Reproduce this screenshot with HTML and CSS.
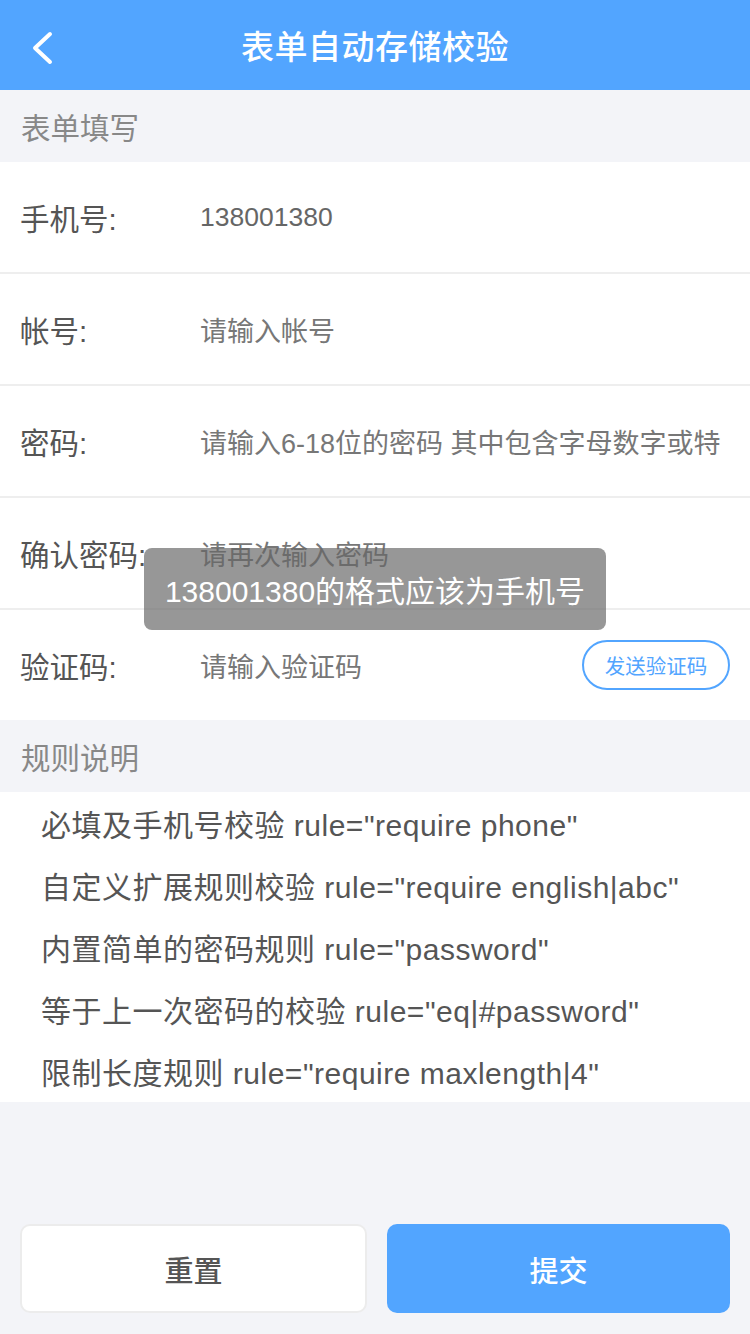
FILE: index.html
```html
<!DOCTYPE html>
<html lang="zh-CN">
<head>
<meta charset="utf-8">
<title>表单自动存储校验</title>
<link rel="stylesheet" href="styles.css">
</head>
<body>
<div class="page">
  <header class="navbar">
    <span class="back">
      <svg width="30" height="40" viewBox="0 0 30 40"><polyline points="20,6 5,20 20,34" fill="none" stroke="#fff" stroke-width="4" stroke-linecap="round" stroke-linejoin="round"/></svg>
    </span>
    <h1 class="title">表单自动存储校验</h1>
  </header>

  <div class="section-title">表单填写</div>
  <div class="form">
    <div class="row">
      <span class="label">手机号:</span>
      <span class="value filled">138001380</span>
    </div>
    <div class="row">
      <span class="label">帐号:</span>
      <span class="value">请输入帐号</span>
    </div>
    <div class="row">
      <span class="label">密码:</span>
      <span class="value">请输入6-18位的密码 其中包含字母数字或特</span>
    </div>
    <div class="row">
      <span class="label">确认密码:</span>
      <span class="value">请再次输入密码</span>
    </div>
    <div class="row">
      <span class="label">验证码:</span>
      <span class="value">请输入验证码</span>
      <span class="send">发送验证码</span>
    </div>
  </div>

  <div class="section-title">规则说明</div>
  <div class="rules">
    <div class="rule">必填及手机号校验 rule="require phone"</div>
    <div class="rule">自定义扩展规则校验 rule="require english|abc"</div>
    <div class="rule">内置简单的密码规则 rule="password"</div>
    <div class="rule">等于上一次密码的校验 rule="eq|#password"</div>
    <div class="rule">限制长度规则 rule="require maxlength|4"</div>
  </div>

  <div class="footer">
    <div class="btn reset">重置</div>
    <div class="btn submit">提交</div>
  </div>

  <div class="toast">138001380的格式应该为手机号</div>
</div>
</body>
</html>
```

FILE: styles.css
```css
* { box-sizing: border-box; margin: 0; padding: 0; }
html, body { width: 750px; height: 1334px; }
body {
  background: #f3f4f8;
  font-family: "Liberation Sans", "Noto Sans CJK SC", sans-serif;
  color: #555;
}
.page {
  position: relative;
  width: 750px;
  height: 1334px;
  display: flex;
  flex-direction: column;
}
.navbar {
  height: 90px;
  background: #52a5ff;
  display: flex;
  align-items: center;
  justify-content: center;
  position: relative;
}
.back {
  position: absolute;
  left: 30px;
  top: 28px;
  width: 30px;
  height: 40px;
}
.title {
  font-family: "Noto Sans CJK SC", sans-serif;
  font-size: 33px;
  font-weight: 500;
  color: #fff;
  letter-spacing: 0.5px;
}
.section-title {
  height: 72px;
  display: flex;
  align-items: center;
  padding-left: 21px;
  font-family: "Noto Sans CJK SC", sans-serif;
  font-size: 29.5px;
  color: #888;
}
.form { background: #fff; }
.row {
  height: 112px;
  display: flex;
  align-items: center;
  padding: 0 20px;
  border-bottom: 2px solid #eeeeee;
}
.row:last-child { height: 110px; border-bottom: none; }
.label {
  width: 180px;
  flex: none;
  font-size: 29.5px;
  color: #555;
}
.value {
  flex: 1;
  min-width: 0;
  white-space: nowrap;
  font-size: 27px;
  color: #777;
}
.value.filled { color: #666; font-size: 26.5px; }
.send {
  flex: none;
  width: 148px;
  height: 50px;
  border: 2px solid #52a5ff;
  border-radius: 25px;
  display: flex;
  align-items: center;
  justify-content: center;
  font-family: "Noto Sans CJK SC", sans-serif;
  font-size: 20.5px;
  color: #52a5ff;
}
.rules { background: #fff; }
.rule {
  height: 62px;
  display: flex;
  align-items: center;
  padding-left: 41px;
  font-size: 30px;
  letter-spacing: 0.5px;
  color: #555;
  white-space: nowrap;
}
.footer {
  margin-top: auto;
  display: flex;
  gap: 20px;
  padding: 0 20px 21px;
}
.btn {
  flex: 1;
  height: 89px;
  border-radius: 10px;
  display: flex;
  align-items: center;
  justify-content: center;
  font-family: "Noto Sans CJK SC", sans-serif;
  font-size: 29px;
  font-weight: 500;
}
.reset {
  background: #fff;
  border: 2px solid #ececec;
  color: #555;
}
.submit {
  background: #52a5ff;
  color: #fff;
}
.toast {
  position: absolute;
  left: 144px;
  top: 548px;
  width: 462px;
  height: 82px;
  border-radius: 8px;
  background: rgba(102, 102, 102, 0.68);
  color: #fff;
  display: flex;
  align-items: center;
  justify-content: center;
  font-size: 30px;
  white-space: nowrap;
}
```
